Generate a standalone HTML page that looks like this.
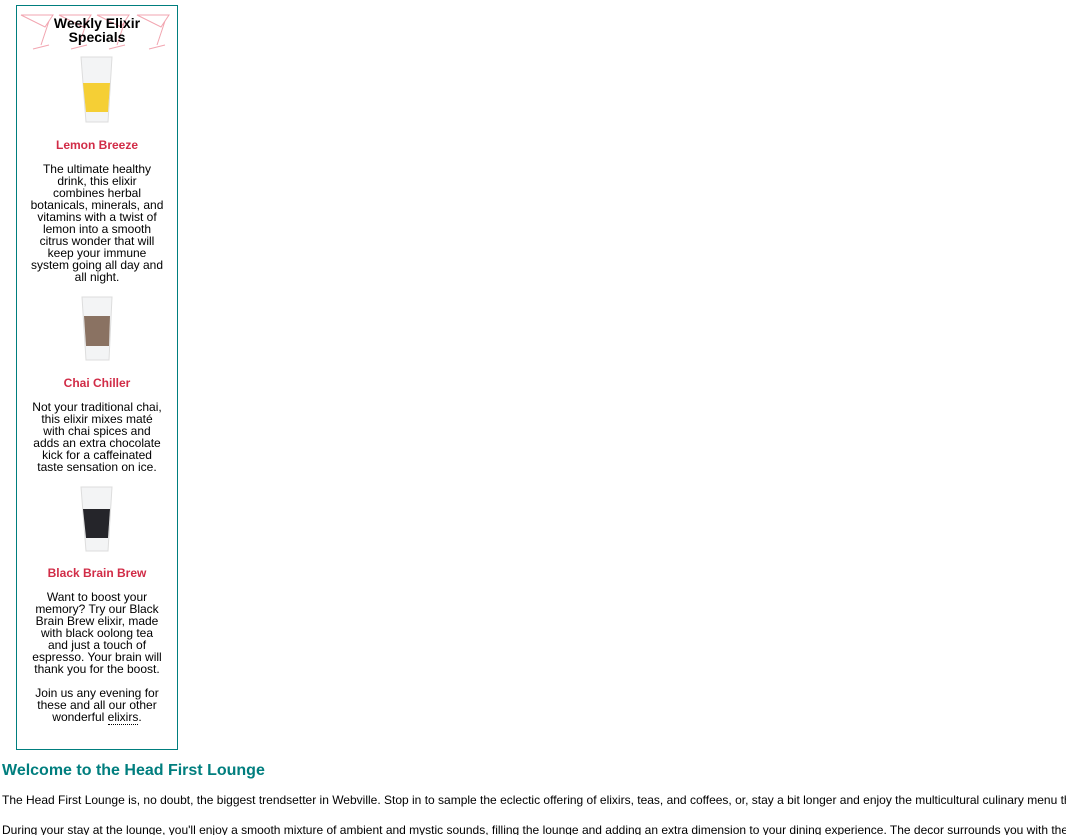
<!DOCTYPE html>
<html><head><meta charset="utf-8"><style>
*{margin:0;padding:0}
html,body{width:1066px;height:835px;overflow:hidden}
body{background:#fff;font-family:"Liberation Sans",sans-serif;font-size:12px;color:#000;position:relative}
#wrap{position:absolute;left:0;top:0;width:1066px;height:835px;overflow:hidden}
#side{position:absolute;left:16px;top:5px;width:160px;height:743px;border:1px solid #007e7e}
.c{position:absolute;left:16px;width:162px;text-align:center;line-height:12px}
.t{position:absolute;left:16px;width:162px;text-align:center;font-weight:bold;color:#d12c47;font-size:12px}
.p{position:absolute;left:2px;white-space:nowrap;line-height:14px}
abbr{text-decoration:none;border-bottom:1px dotted #000}
</style></head><body><div id="wrap">
<div id="side">
<svg width="160" height="40" style="position:absolute;left:2px;top:5px" fill="none" stroke="#f2a5b0" stroke-width="1">
<g><path d="M2 4 L26 16 L34 4 Z M30 10 L22 34 M14 38 L30 34"/></g>
<g transform="translate(38,0)"><path d="M2 4 L26 16 L34 4 Z M30 10 L22 34 M14 38 L30 34"/></g>
<g transform="translate(76,0)"><path d="M2 4 L26 16 L34 4 Z M30 10 L22 34 M14 38 L30 34"/></g>
<g transform="translate(116,0)"><path d="M2 4 L26 16 L34 4 Z M30 10 L22 34 M14 38 L30 34"/></g>
</svg>
</div>
<div class="c" style="top:16px;font-weight:bold;font-size:14px;line-height:14px">Weekly Elixir<br>Specials</div>
<svg style="position:absolute;left:80px;top:56px" width="34" height="70"><path d="M1 1 L32 1 L28 66 L6 66 Z" fill="#f3f4f5" stroke="#ddd"/><path d="M3 27 L30 27 L28 56 L6 56 Z" fill="#f5cf35"/></svg>
<div class="t" style="top:138px">Lemon Breeze</div>
<div class="c" style="top:163px">The ultimate healthy<br>drink, this elixir<br>combines herbal<br>botanicals, minerals, and<br>vitamins with a twist of<br>lemon into a smooth<br>citrus wonder that will<br>keep your immune<br>system going all day and<br>all night.</div>
<svg style="position:absolute;left:81px;top:296px" width="32" height="68"><path d="M1 1 L31 1 L28 64 L5 64 Z" fill="#f3f4f5" stroke="#ddd"/><path d="M3 20 L29 20 L28 50 L5 50 Z" fill="#8a7262"/></svg>
<div class="t" style="top:376px">Chai Chiller</div>
<div class="c" style="top:401px">Not your traditional chai,<br>this elixir mixes maté<br>with chai spices and<br>adds an extra chocolate<br>kick for a caffeinated<br>taste sensation on ice.</div>
<svg style="position:absolute;left:80px;top:486px" width="34" height="68"><path d="M1 1 L32 1 L28 65 L6 65 Z" fill="#f3f4f5" stroke="#ddd"/><path d="M3 23 L30 23 L28 52 L6 52 Z" fill="#25252a"/></svg>
<div class="t" style="top:566px">Black Brain Brew</div>
<div class="c" style="top:591px">Want to boost your<br>memory? Try our Black<br>Brain Brew elixir, made<br>with black oolong tea<br>and just a touch of<br>espresso. Your brain will<br>thank you for the boost.</div>
<div class="c" style="top:687px">Join us any evening for<br>these and all our other<br>wonderful <abbr>elixirs</abbr>.</div>
<div class="p" style="top:762px;font-size:16px;font-weight:bold;color:#007e7e;line-height:18px">Welcome to the Head First Lounge</div>
<div class="p" style="top:793px">The Head First Lounge is, no doubt, the biggest trendsetter in Webville. Stop in to sample the eclectic offering of elixirs, teas, and coffees, or, stay a bit longer and enjoy the multicultural culinary menu that combines</div>
<div class="p" style="top:823px">During your stay at the lounge, you'll enjoy a smooth mixture of ambient and mystic sounds, filling the lounge and adding an extra dimension to your dining experience. The decor surrounds you with the</div>
</div></body></html>
